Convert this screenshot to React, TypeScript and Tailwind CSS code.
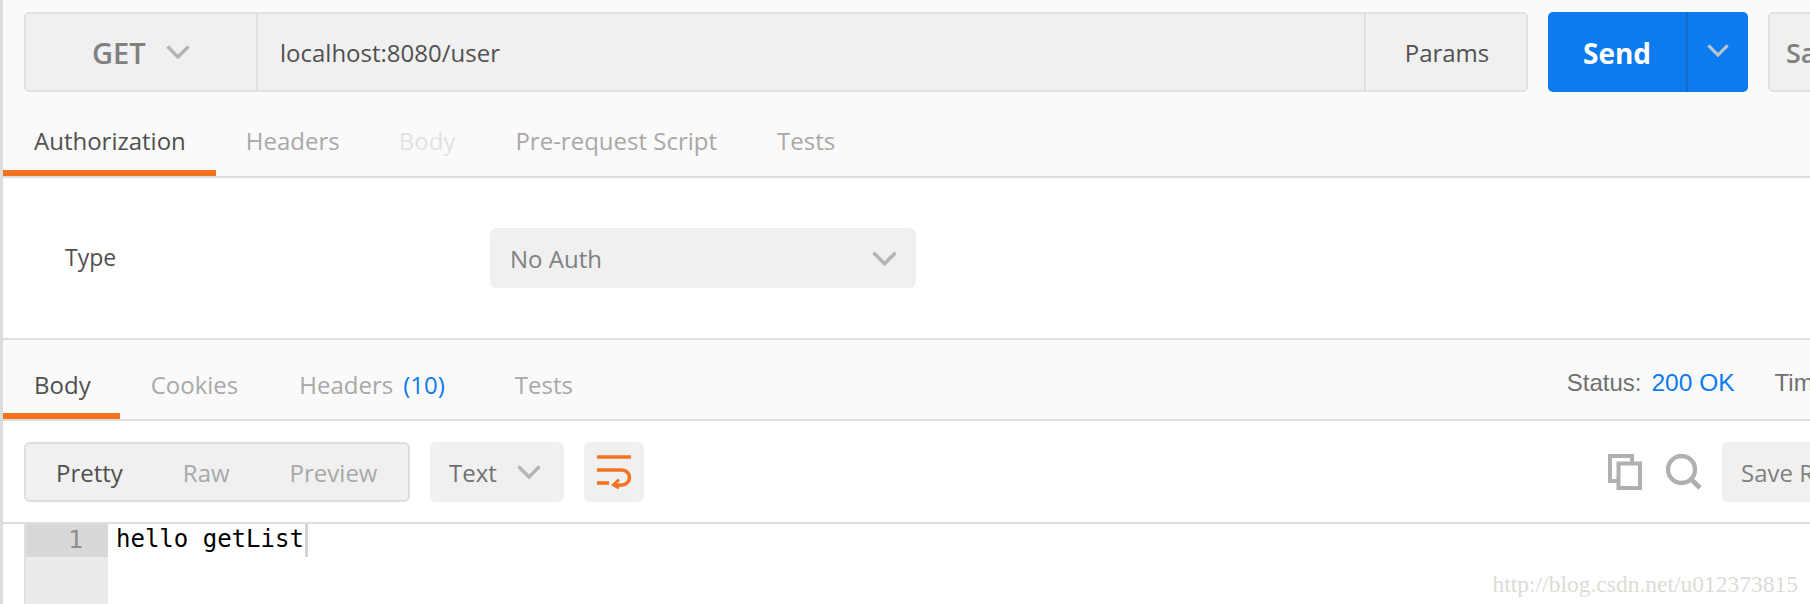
import React from "react";

const sans = "font-['Open_Sans','Noto_Sans',sans-serif]";

function Chevron({ className }: { className: string }) {
  return (
    <svg viewBox="0 0 24 14" className={className} fill="none" stroke="currentColor" strokeWidth="3.4">
      <path d="M1.5 1.5 12 12 22.5 1.5" />
    </svg>
  );
}

export default function App() {
  return (
    <div className={`w-[1810px] h-[604px] overflow-hidden bg-white border-l-[3px] border-[#dcdcdc] flex flex-col ${sans}`}>
      {/* request bar */}
      <div className="h-[178px] shrink-0 bg-[#fafafa] border-b-2 border-[#dedede] flex flex-col">
        <div className="flex pl-[21px] pt-[12px] h-[92px] shrink-0">
          <div className="w-[1504px] h-[80px] shrink-0 flex bg-[#f0f0f0] border-2 border-[#e0e0e0] rounded-[5px]">
            <div className="w-[232px] shrink-0 flex items-center pl-[66px] pt-[2px] border-r-2 border-[#e0e0e0]">
              <span className="text-[29px] font-semibold text-[#808080]">GET</span>
              <Chevron className="w-[24px] h-[14px] ml-[20px] mb-[2px] text-[#b4b4b4]" />
            </div>
            <div className="flex-1 flex items-center pl-[22px] pt-[2px] text-[24px] text-[#505050]">localhost:8080/user</div>
            <div className="w-[162px] shrink-0 flex items-center justify-center pl-[2px] pt-[2px] border-l-2 border-[#e0e0e0] text-[24px] text-[#505050]">Params</div>
          </div>
          <div className="ml-[20px] w-[200px] h-[80px] shrink-0 flex bg-[#0b7bee] rounded-[5px]">
            <div className="w-[140px] flex items-center justify-center pt-[2px] border-r-2 border-[#1a6cc4] text-[28px] font-bold text-white">Send</div>
            <div className="flex-1 flex items-center justify-center pb-[4px]">
              <Chevron className="w-[22px] h-[13px] text-[#b8c4d0]" />
            </div>
          </div>
          <div className="ml-[20px] w-[200px] h-[80px] shrink-0 flex items-center pl-[16px] pt-[2px] bg-[#f0f0f0] border-2 border-[#e0e0e0] rounded-[5px] text-[27px] font-semibold text-[#808080]">Save</div>
        </div>
        <div className="flex-1 flex items-start pl-[31px] pt-[29px] text-[24px] leading-[40px] relative">
          <span className="text-[#505050] mr-[60px]">Authorization</span>
          <span className="mr-[59px] text-[#a8a8a8]">Headers</span>
          <span className="mr-[60px] text-[#e2e2e2]">Body</span>
          <span className="mr-[60px] text-[#a8a8a8]">Pre-request Script</span>
          <span className="text-[#a8a8a8]">Tests</span>
          <div className="absolute left-0 bottom-0 w-[213px] h-[6px] bg-[#f47321]" />
        </div>
      </div>

      {/* auth section */}
      <div className="h-[162px] shrink-0 flex items-start pt-[50px] pl-[62px] border-b-2 border-[#dedede]">
        <div className="w-[425px] shrink-0 h-[60px] flex items-center pb-[2px] text-[23px] text-[#505050]">Type</div>
        <div className="w-[426px] h-[60px] flex items-center justify-between pl-[20px] pr-[19px] pt-[2px] bg-[#f0f0f0] rounded-[6px] text-[24px] text-[#808080]">
          <span>No Auth</span>
          <Chevron className="w-[25px] h-[15px] mb-[2px] text-[#b4b4b4]" />
        </div>
      </div>

      {/* response tabs */}
      <div className="h-[81px] shrink-0 bg-[#fafafa] border-b-2 border-[#dedede] flex items-start relative">
        <div className="flex pl-[31px] pt-[25px] text-[24px] leading-[40px] text-[#a8a8a8]">
          <span className="text-[#505050] mr-[60px]">Body</span>
          <span className="mr-[61px]">Cookies</span>
          <span>Headers</span>
          <span className="ml-[10px] text-[#0b7bee]">(10)</span>
          <span className="ml-[70px]">Tests</span>
        </div>
        <div className="ml-auto flex pt-[25px] mr-[-17px] font-['Liberation_Sans',sans-serif] text-[24px] leading-[36px] whitespace-nowrap">
          <span className="text-[#707070]">Status:</span>
          <span className="ml-[10px] text-[#0b7bee] text-[24.5px]">200 OK</span>
          <span className="ml-[40px] text-[#707070]">Time</span>
        </div>
        <div className="absolute left-0 bottom-0 w-[117px] h-[6px] bg-[#f47321]" />
      </div>

      {/* response toolbar */}
      <div className="h-[103px] shrink-0 flex items-start pt-[21px] pl-[21px] border-b-2 border-[#dedede]">
        <div className="w-[386px] h-[60px] shrink-0 flex items-center pl-[30px] pt-[2px] bg-[#f0f0f0] border-2 border-[#dedede] rounded-[6px] text-[24px] text-[#a8a8a8]">
          <span className="text-[#505050]">Pretty</span>
          <span className="ml-[60px]">Raw</span>
          <span className="ml-[60px]">Preview</span>
        </div>
        <div className="ml-[20px] w-[134px] h-[60px] shrink-0 flex items-center pl-[19px] pt-[2px] bg-[#f0f0f0] rounded-[6px] text-[24px] text-[#707070]">
          <span>Text</span>
          <Chevron className="w-[24px] h-[14px] ml-[20px] mb-[2px] text-[#b4b4b4]" />
        </div>
        <div className="ml-[20px] w-[60px] h-[60px] shrink-0 flex items-center justify-center bg-[#f0f0f0] rounded-[6px]">
          <svg viewBox="0 0 36 34" className="w-[36px] h-[34px]" fill="none" stroke="#f47321" strokeWidth="3.6">
            <path d="M1 2H35" />
            <path d="M1 15H26a7.5 7.5 0 0 1 0 15H19" />
            <path d="M1 28H13" />
            <path d="M23 24.5 17.5 30 23 33" strokeWidth="3" />
          </svg>
        </div>
        <svg viewBox="0 0 34 36" className="ml-[964px] mt-[12px] w-[34px] h-[36px] shrink-0" fill="none" stroke="#b0b0b0" strokeWidth="4">
          <path d="M9 27H2V2H24V9" />
          <rect x="10.5" y="9.5" width="21.5" height="24.5" />
        </svg>
        <svg viewBox="0 0 36 36" className="ml-[24px] mt-[12px] w-[36px] h-[36px] shrink-0" fill="none" stroke="#b0b0b0">
          <circle cx="15.5" cy="15.5" r="13.5" strokeWidth="4.4" />
          <path d="M24.5 24.5 34 34" strokeWidth="5" />
        </svg>
        <div className="ml-[20px] w-[200px] h-[60px] shrink-0 flex items-center pl-[19px] pt-[2px] bg-[#f0f0f0] rounded-l-[6px] text-[24px] text-[#808080] whitespace-nowrap">Save Response</div>
      </div>

      {/* editor */}
      <div className="flex-1 flex pl-[21px] min-h-0 relative">
        <div className="w-[84px] shrink-0 bg-[#ebebeb] border-l-2 border-[#e0e0e0]">
          <div className="h-[33px] bg-[#d8d8d8] text-right pr-[25px] font-['DejaVu_Sans_Mono',monospace] text-[25px] leading-[31px] text-[#909090]">1</div>
        </div>
        <div className="pl-[8px] h-[33px] flex items-center font-['DejaVu_Sans_Mono',monospace] text-[24px] leading-[31px] text-black whitespace-pre">
          <span className="mb-[2px]">hello getList</span>
          <span className="ml-[1px] w-[3px] h-[33px] bg-[#d4d4d4]" />
        </div>
        <div className="absolute right-[12px] bottom-[7px] font-['Liberation_Serif',serif] text-[23.5px] leading-[26px] text-[#dcdcd6]">http://blog.csdn.net/u012373815</div>
      </div>
    </div>
  );
}
